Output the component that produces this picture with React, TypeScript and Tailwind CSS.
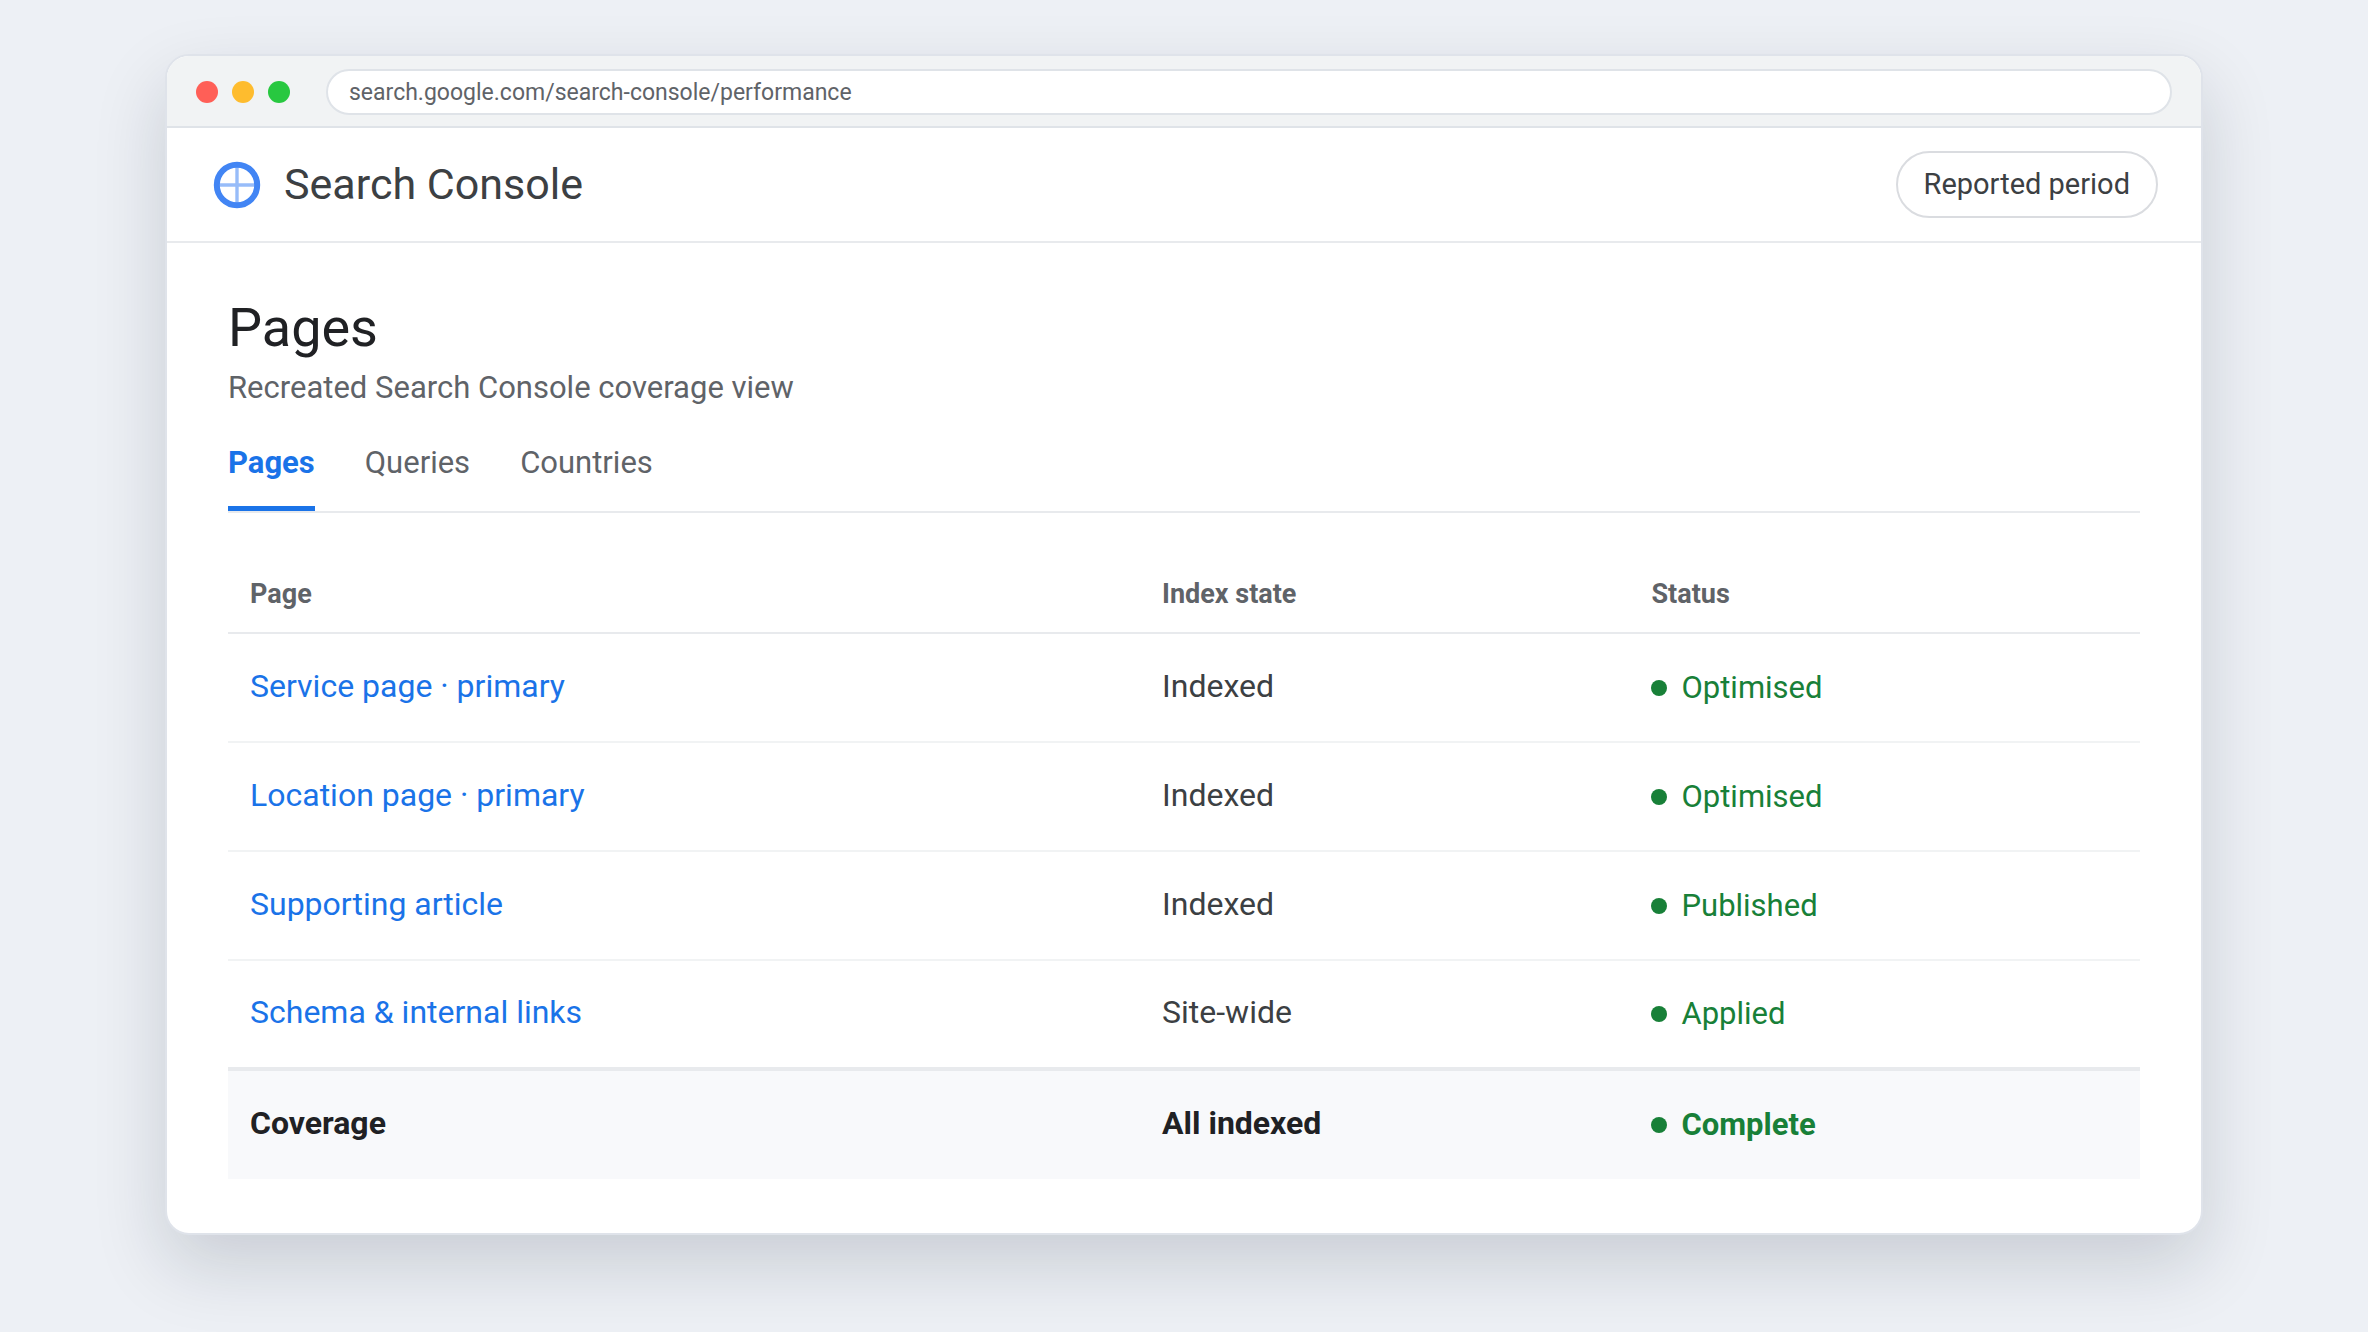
import { clsx } from "clsx";

const tabs = ["Pages", "Queries", "Countries"];

const rows = [
  { page: "Service page · primary", state: "Indexed", status: "Optimised" },
  { page: "Location page · primary", state: "Indexed", status: "Optimised" },
  { page: "Supporting article", state: "Indexed", status: "Published" },
  { page: "Schema & internal links", state: "Site-wide", status: "Applied" },
];

const Logo = () => (
  <svg viewBox="0 0 54 54" className="size-[54px]" fill="none" aria-hidden="true">
    <path d="M27 9v36M9 27h36" stroke="#4285f4" strokeOpacity="0.55" strokeWidth="3.4" />
    <circle cx="27" cy="27" r="20.2" stroke="#4285f4" strokeWidth="6" />
  </svg>
);

const BrowserBar = () => (
  <div className="flex h-[72px] items-center border-b-2 border-[#dfe3e8] bg-[#f1f3f4] px-[29px] pt-0.5">
    <div className="flex gap-[14px]">
      <span className="size-[22px] rounded-full bg-[#ff5f57]" />
      <span className="size-[22px] rounded-full bg-[#febc2e]" />
      <span className="size-[22px] rounded-full bg-[#28c840]" />
    </div>
    <input
      type="text"
      aria-label="Address"
      readOnly
      defaultValue="search.google.com/search-console/performance"
      className="ml-9 h-[46px] min-w-0 flex-1 rounded-full border-2 border-[#dfe3e8] bg-white px-[21px] text-[23px] text-[#5f6368] outline-none"
    />
  </div>
);

const Status = ({ label }: { label: string }) => (
  <span className="flex items-center gap-[14px] text-[31px] leading-9 text-[#188038]">
    <span className="size-4 rounded-full bg-[#188038]" />
    {label}
  </span>
);

const PagesTable = () => (
  <table className="mt-[51px] w-full table-fixed border-separate border-spacing-0 text-left [&_td:not(:last-child)]:pb-1">
    <thead>
      <tr className="text-[27px] leading-8 text-[#5f6368]">
        <th className="h-[70px] w-[47.7%] border-b-2 border-[#e8eaed] px-[22px] pb-2 font-bold">Page</th>
        <th className="w-[25.6%] border-b-2 border-[#e8eaed] px-[22px] pb-2 font-bold">Index state</th>
        <th className="border-b-2 border-[#e8eaed] px-[22px] pb-2 font-bold">Status</th>
      </tr>
    </thead>
    <tbody className="text-[32px] leading-9 text-[#3c4043] [&_td]:h-[109px] [&_td]:border-b-2 [&_td]:border-[#f1f3f4] [&_td]:px-[22px] [&_tr:last-child_td]:h-[106px] [&_tr:last-child_td]:border-b-0">
      {rows.map((row) => (
        <tr key={row.page}>
          <td>
            <a href="#" className="text-[#1a73e8]">
              {row.page}
            </a>
          </td>
          <td>{row.state}</td>
          <td>
            <Status label={row.status} />
          </td>
        </tr>
      ))}
    </tbody>
    <tfoot className="bg-[#f8f9fb] text-[32px] leading-9 font-bold text-[#202124] [&_td]:h-28 [&_td]:border-t-4 [&_td]:border-[#e8eaed] [&_td]:px-[22px]">
      <tr>
        <td>Coverage</td>
        <td>All indexed</td>
        <td>
          <Status label="Complete" />
        </td>
      </tr>
    </tfoot>
  </table>
);

const App = () => {
  return (
    <div className="min-h-screen bg-[#edf0f5] px-[165px] pt-[54px] pb-24 font-[Roboto,sans-serif]">
      <div className="overflow-hidden rounded-3xl border-2 border-[#dfe3ea] bg-white shadow-[0_30px_72px_rgba(15,23,42,0.16)]">
        <BrowserBar />
        <header className="flex h-[115px] items-center justify-between border-b-2 border-[#e8eaed] px-[43px]">
          <div className="flex items-center gap-5">
            <Logo />
            <span className="text-[43px] leading-none text-[#3c4043]">Search Console</span>
          </div>
          <button
            type="button"
            className="h-[67px] rounded-full border-2 border-[#dadce0] px-[26px] text-[29px] text-[#3c4043]"
          >
            Reported period
          </button>
        </header>
        <main className="px-[61px] py-[54px]">
          <h1 className="text-[54px] leading-[62px] text-[#202124]">Pages</h1>
          <p className="mt-[11px] text-[31px] leading-9 text-[#5f6368]">Recreated Search Console coverage view</p>
          <nav className="mt-[39px] flex gap-[50px] border-b-2 border-[#e8eaed] text-[31px] leading-9">
            {tabs.map((tab, i) => (
              <button
                key={tab}
                type="button"
                className={clsx(
                  "border-b-[5px] pb-[25px]",
                  i === 0 ? "border-[#1a73e8] font-bold text-[#1a73e8]" : "border-transparent text-[#5f6368]"
                )}
              >
                {tab}
              </button>
            ))}
          </nav>
          <PagesTable />
        </main>
      </div>
    </div>
  );
};

export default App;
